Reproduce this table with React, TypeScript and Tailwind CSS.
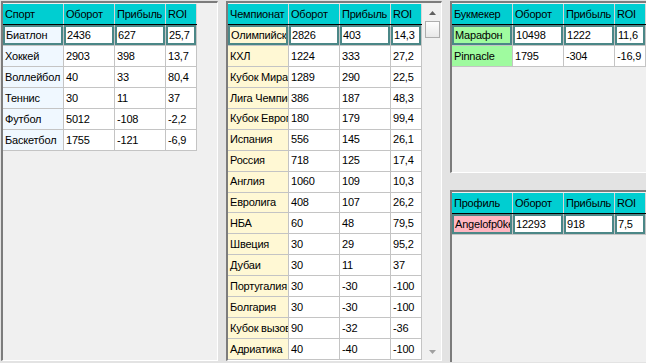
import React from 'react';

type GridProps = {
  headers: string[];
  rows: string[][];
  firstBg: string;
};

const widths = ['w-[61px]', 'w-[51px]', 'w-[51px]', 'w-[31px]'];

const Grid: React.FC<GridProps> = ({ headers, rows, firstBg }) => {
  return (
    <div className="flex flex-col w-fit">
      {/* Header */}
      <div className="flex h-[21px] border-b border-black">
        {headers.map((h, i) => (
          <div key={i} className={`${widths[i]} h-full shrink-0 border-r border-[#d6d6d6]`}>
            <div className="h-full flex items-center pl-[2px] overflow-hidden whitespace-nowrap bg-[#00ced1]">
              {h}
            </div>
          </div>
        ))}
      </div>

      {rows.map((row, r) => (
        <div key={r} className="flex h-[21px] border-b border-[#c4c4c4]">
          {row.map((cell, c) => (
            <div key={c} className={`${widths[c]} h-full shrink-0 border-r border-[#c4c4c4]`}>
              <div
                className={`h-full flex items-center overflow-hidden whitespace-nowrap ${
                  c === 0 ? firstBg : 'bg-white'
                } ${r === 0 ? 'border-2 border-[#4b8787] pl-px' : 'pl-[2px]'}`}
              >
                {cell}
              </div>
            </div>
          ))}
        </div>
      ))}
    </div>
  );
};

const Scrollbar: React.FC = () => (
  <div className="w-[17px] h-full shrink-0 flex flex-col bg-[#f0f0f0]">
    <div className="h-[17px] flex items-center justify-center">
      <svg width="7" height="4" viewBox="0 0 7 4">
        <polygon points="0,4 3.5,0 7,4" fill="#606060" />
      </svg>
    </div>
    <div className="h-[17px] mx-px border border-[#adadad] bg-gradient-to-b from-[#fdfdfd] to-[#e8e8e8]" />
    <div className="flex-1" />
    <div className="h-[17px] flex items-center justify-center">
      <svg width="7" height="4" viewBox="0 0 7 4">
        <polygon points="0,0 7,0 3.5,4" fill="#a0a0a0" />
      </svg>
    </div>
  </div>
);

const App: React.FC = () => {
  const sports = [
    ['Биатлон', '2436', '627', '25,7'],
    ['Хоккей', '2903', '398', '13,7'],
    ['Воллейбол', '40', '33', '80,4'],
    ['Теннис', '30', '11', '37'],
    ['Футбол', '5012', '-108', '-2,2'],
    ['Баскетбол', '1755', '-121', '-6,9'],
  ];

  const leagues = [
    ['Олимпийские игры', '2826', '403', '14,3'],
    ['КХЛ', '1224', '333', '27,2'],
    ['Кубок Мира', '1289', '290', '22,5'],
    ['Лига Чемпионов', '386', '187', '48,3'],
    ['Кубок Европы', '180', '179', '99,4'],
    ['Испания', '556', '145', '26,1'],
    ['Россия', '718', '125', '17,4'],
    ['Англия', '1060', '109', '10,3'],
    ['Евролига', '408', '107', '26,2'],
    ['НБА', '60', '48', '79,5'],
    ['Швеция', '30', '29', '95,2'],
    ['Дубаи', '30', '11', '37'],
    ['Португалия', '30', '-30', '-100'],
    ['Болгария', '30', '-30', '-100'],
    ['Кубок вызова', '90', '-32', '-36'],
    ['Адриатика', '40', '-40', '-100'],
  ];

  const bookmakers = [
    ['Марафон', '10498', '1222', '11,6'],
    ['Pinnacle', '1795', '-304', '-16,9'],
  ];

  const profiles = [['Angelofp0ker', '12293', '918', '7,5']];

  const panel = 'bg-[#f0f0f0] border-l-2 border-t-2 border-l-[#7c7c7c] border-t-[#7c7c7c] overflow-hidden pt-px';

  return (
    <div className="w-[646px] h-[363px] overflow-hidden bg-[#e3e3e3] flex items-start pl-px pt-px font-['Liberation_Sans',Arial,sans-serif] text-[11px] tracking-[-0.2px] text-black">
      {/* Спорт */}
      <div className={`${panel} w-[217px] h-[360px] border-r border-b border-r-white border-b-white`}>
        <Grid headers={['Спорт', 'Оборот', 'Прибыль', 'ROI']} rows={sports} firstBg="bg-[#f0f8ff]" />
      </div>

      {/* Чемпионат */}
      <div className={`${panel} ml-[8px] w-[216px] h-[360px] border-r border-b border-r-white border-b-white flex`}>
        <Grid headers={['Чемпионат', 'Оборот', 'Прибыль', 'ROI']} rows={leagues} firstBg="bg-[#fff8d4]" />
        <div className="ml-[2px] h-full">
          <Scrollbar />
        </div>
      </div>

      {/* Букмекер / Профиль */}
      <div className="ml-[8px] flex flex-col">
        <div className={`${panel} w-[196px] h-[172px] border-b border-b-white`}>
          <Grid headers={['Букмекер', 'Оборот', 'Прибыль', 'ROI']} rows={bookmakers} firstBg="bg-[#9ffb9f]" />
        </div>
        <div className={`${panel} mt-[17px] w-[196px] h-[172px]`}>
          <Grid headers={['Профиль', 'Оборот', 'Прибыль', 'ROI']} rows={profiles} firstBg="bg-[#ffb6c1]" />
        </div>
      </div>
    </div>
  );
};

export default App;
